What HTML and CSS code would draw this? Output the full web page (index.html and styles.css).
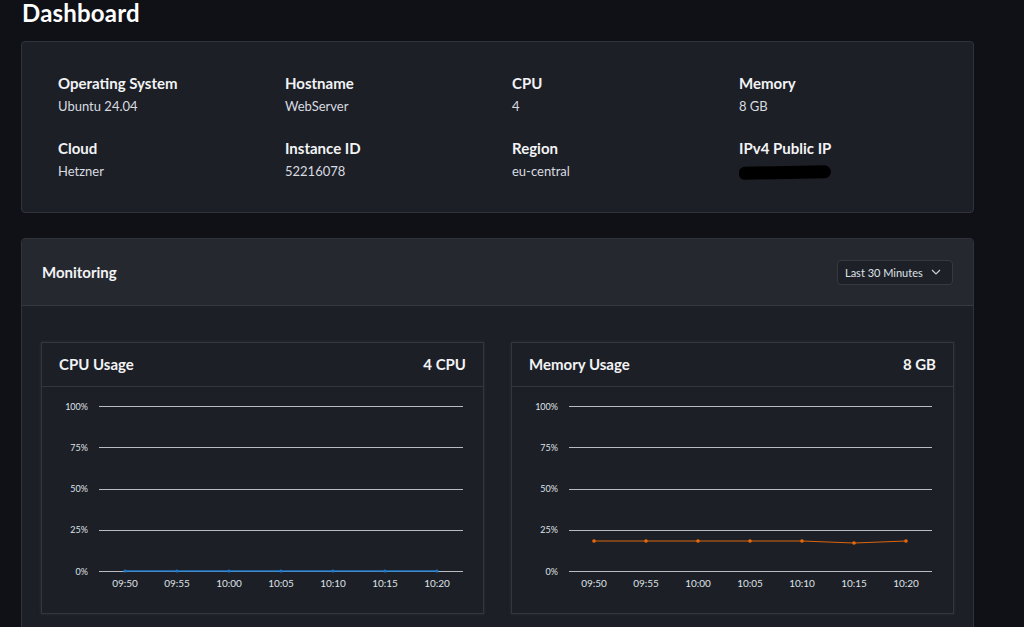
FILE: index.html
```html
<!DOCTYPE html>
<html lang="en">
<head>
<meta charset="utf-8">
<title>Dashboard</title>
<link rel="stylesheet" href="styles.css">
</head>
<body>
<h1 class="page-title">Dashboard</h1>

<section class="card info-card">
  <div class="info-grid">
    <div class="info-item"><div class="info-label">Operating System</div><div class="info-value">Ubuntu 24.04</div></div>
    <div class="info-item"><div class="info-label">Hostname</div><div class="info-value">WebServer</div></div>
    <div class="info-item"><div class="info-label">CPU</div><div class="info-value">4</div></div>
    <div class="info-item"><div class="info-label">Memory</div><div class="info-value">8 GB</div></div>
    <div class="info-item"><div class="info-label">Cloud</div><div class="info-value">Hetzner</div></div>
    <div class="info-item"><div class="info-label">Instance ID</div><div class="info-value">52216078</div></div>
    <div class="info-item"><div class="info-label">Region</div><div class="info-value">eu-central</div></div>
    <div class="info-item"><div class="info-label">IPv4 Public IP</div><div class="info-value"><span class="redacted"></span></div></div>
  </div>
</section>

<section class="card monitoring">
  <header class="mon-header">
    <h2 class="mon-title">Monitoring</h2>
    <button class="range-select">Last 30 Minutes
      <svg class="chev" width="10" height="6" viewBox="0 0 10 6"><path d="M1 1l4 4 4-4" fill="none" stroke="#c9ccd3" stroke-width="1.2"/></svg>
    </button>
  </header>
  <div class="mon-body">
    <div class="chart-card">
      <div class="chart-head"><span>CPU Usage</span><span>4 CPU</span></div>
      <svg class="chart" width="441" height="226" viewBox="0 0 441 226">
        <g class="grid">
          <line x1="57" x2="421" y1="19.5" y2="19.5"/>
          <line x1="57" x2="421" y1="60.5" y2="60.5"/>
          <line x1="57" x2="421" y1="102.5" y2="102.5"/>
          <line x1="57" x2="421" y1="143.5" y2="143.5"/>
          <line x1="57" x2="421" y1="184.5" y2="184.5"/>
        </g>
        <g class="ylab">
          <text x="46" y="22.5">100%</text>
          <text x="46" y="63.5">75%</text>
          <text x="46" y="105">50%</text>
          <text x="46" y="146">25%</text>
          <text x="46" y="187.5">0%</text>
        </g>
        <g class="xlab">
          <text x="83" y="200">09:50</text>
          <text x="135" y="200">09:55</text>
          <text x="187" y="200">10:00</text>
          <text x="239" y="200">10:05</text>
          <text x="291" y="200">10:10</text>
          <text x="343" y="200">10:15</text>
          <text x="395" y="200">10:20</text>
        </g>
        <polyline class="line-cpu" points="83,184 135,184 187,184 239,184 291,184 343,184 395,184"/>
        <g class="dots-cpu">
          <circle cx="83" cy="184" r="1.6"/><circle cx="135" cy="184" r="1.6"/><circle cx="187" cy="184" r="1.6"/><circle cx="239" cy="184" r="1.6"/><circle cx="291" cy="184" r="1.6"/><circle cx="343" cy="184" r="1.6"/><circle cx="395" cy="184" r="1.6"/>
        </g>
      </svg>
    </div>
    <div class="chart-card">
      <div class="chart-head"><span>Memory Usage</span><span>8 GB</span></div>
      <svg class="chart" width="441" height="226" viewBox="0 0 441 226">
        <g class="grid">
          <line x1="57" x2="420" y1="19.5" y2="19.5"/>
          <line x1="57" x2="420" y1="60.5" y2="60.5"/>
          <line x1="57" x2="420" y1="102.5" y2="102.5"/>
          <line x1="57" x2="420" y1="143.5" y2="143.5"/>
          <line x1="57" x2="420" y1="184.5" y2="184.5"/>
        </g>
        <g class="ylab">
          <text x="46" y="22.5">100%</text>
          <text x="46" y="63.5">75%</text>
          <text x="46" y="105">50%</text>
          <text x="46" y="146">25%</text>
          <text x="46" y="187.5">0%</text>
        </g>
        <g class="xlab">
          <text x="82" y="200">09:50</text>
          <text x="134" y="200">09:55</text>
          <text x="186" y="200">10:00</text>
          <text x="238" y="200">10:05</text>
          <text x="290" y="200">10:10</text>
          <text x="342" y="200">10:15</text>
          <text x="394" y="200">10:20</text>
        </g>
        <polyline class="line-mem" points="82,154 134,154 186,154 238,154 290,154 342,156 394,154"/>
        <g class="dots-mem">
          <circle cx="82" cy="154" r="1.8"/><circle cx="134" cy="154" r="1.8"/><circle cx="186" cy="154" r="1.8"/><circle cx="238" cy="154" r="1.8"/><circle cx="290" cy="154" r="1.8"/><circle cx="342" cy="156" r="1.8"/><circle cx="394" cy="154" r="1.8"/>
        </g>
      </svg>
    </div>
  </div>
</section>
</body>
</html>
```
FILE: styles.css
```css
* { box-sizing: border-box; }
html, body { margin: 0; padding: 0; }
body {
  background: #0f1117;
  color: #e6e8ec;
  font-family: Lato, "Noto Sans", sans-serif;
  overflow: hidden;
  height: 627px;
}
.page-title {
  margin: 0;
  padding: 0 0 0 22px;
  font-size: 24px;
  font-weight: 700;
  letter-spacing: 0.2px;
  line-height: 25px;
  color: #ffffff;
}
.card {
  background: #1d1f26;
  border: 1px solid #30333b;
  border-radius: 4px;
  margin: 0 50px 0 21px;
  width: 953px;
}
.info-card {
  margin-top: 16px;
  height: 172px;
  padding: 31px 0 0 36px;
}
.info-grid {
  display: grid;
  grid-template-columns: repeat(4, 227px);
  row-gap: 22px;
}
.info-label {
  font-size: 15px;
  font-weight: 700;
  line-height: 20px;
  color: #f2f3f5;
}
.info-value {
  margin-top: 4px;
  font-size: 13px;
  line-height: 19px;
  color: #d8dbe0;
}
.redacted {
  display: inline-block;
  width: 92px;
  height: 13px;
  margin-top: 4px;
  background: #000;
  border-radius: 7px 8px 8px 6px;
  transform: rotate(-1deg);
}
.monitoring {
  margin-top: 25px;
  height: 420px;
}
.mon-header {
  height: 67px;
  background: #262830;
  border-bottom: 1px solid #363940;
  border-radius: 4px 4px 0 0;
  display: flex;
  align-items: center;
  justify-content: space-between;
  padding: 0 20px 0 20px;
}
.mon-title {
  margin: 0;
  font-size: 15px;
  font-weight: 700;
  color: #f2f3f5;
}
.range-select {
  width: 116px;
  height: 25px;
  background: #1e2027;
  border: 1px solid #363940;
  border-radius: 4px;
  color: #dfe2e7;
  font-family: inherit;
  font-size: 11px;
  display: flex;
  align-items: center;
  justify-content: space-between;
  padding: 0 11px 0 7px;
}
.chev { display: block; }
.mon-body {
  display: flex;
  gap: 27px;
  padding: 36px 20px 0 19px;
}
.chart-card {
  width: 443px;
  height: 272px;
  border: 1px solid #33363d;
  box-shadow: 0 0 3px rgba(70, 73, 80, 0.45);
  background: #1d1f26;
}
.chart-head {
  height: 44px;
  border-bottom: 1px solid #33363d;
  display: flex;
  align-items: center;
  justify-content: space-between;
  padding: 0 17px 1px 17px;
  font-size: 15px;
  font-weight: 700;
  color: #f2f3f5;
}
.chart { display: block; }
.grid line { stroke: #b8bbc1; stroke-width: 1; }
.ylab text {
  fill: #dfe2e7;
  font-size: 9px;
  text-anchor: end;
  font-family: Lato, "Noto Sans", sans-serif;
}
.xlab text {
  fill: #dfe2e7;
  font-size: 10px;
  text-anchor: middle;
  font-family: Lato, "Noto Sans", sans-serif;
}
.line-cpu { fill: none; stroke: #1f78c8; stroke-width: 1.3; }
.dots-cpu circle { fill: #1f78c8; }
.line-mem { fill: none; stroke: #d9640c; stroke-width: 1.2; }
.dots-mem circle { fill: #e8690c; }
```
